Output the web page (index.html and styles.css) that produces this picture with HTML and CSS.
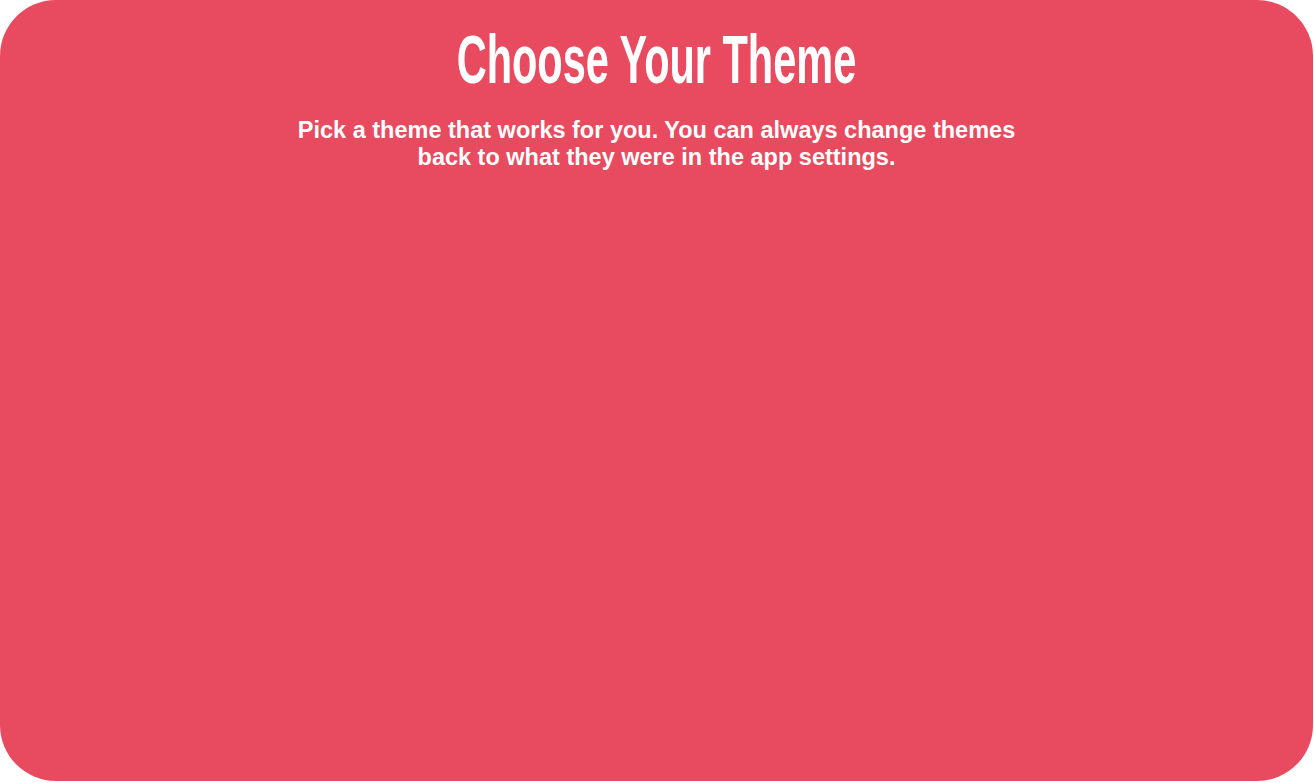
FILE: index.html
```html
<!DOCTYPE html>
<html lang="en">
<head>
<meta charset="utf-8">
<title>Choose Your Theme</title>
<link rel="stylesheet" href="styles.css">
</head>
<body>
<main class="card">
  <header class="intro">
    <h1 class="title"><span class="title-text">Choose Your Theme</span></h1>
    <p class="subtitle">Pick a theme that works for you. You can always change themes<br>back to what they were in the app settings.</p>
  </header>
</main>
</body>
</html>
```

FILE: styles.css
```css
html, body {
  margin: 0;
  padding: 0;
  background: #ffffff;
}

body {
  width: 1314px;
  height: 783px;
  overflow: hidden;
}

.card {
  box-sizing: border-box;
  width: 1313px;
  height: 781px;
  background: #e84a5f;
  border-radius: 56px;
  display: flex;
  flex-direction: column;
  align-items: center;
  padding-top: 25px;
}

.intro {
  display: flex;
  flex-direction: column;
  align-items: center;
  color: #ffffff;
  text-align: center;
}

.title {
  margin: 0;
  font-family: "Liberation Sans", Arial, sans-serif;
  font-weight: 700;
  font-size: 68px;
  line-height: 68px;
  height: 68px;
}

.title-text {
  display: inline-block;
  transform: scaleX(0.61);
  transform-origin: center;
  white-space: nowrap;
}

.subtitle {
  margin: 24px 0 0;
  font-family: "Liberation Sans", Arial, sans-serif;
  font-weight: 700;
  font-size: 23.5px;
  line-height: 27px;
}
```
